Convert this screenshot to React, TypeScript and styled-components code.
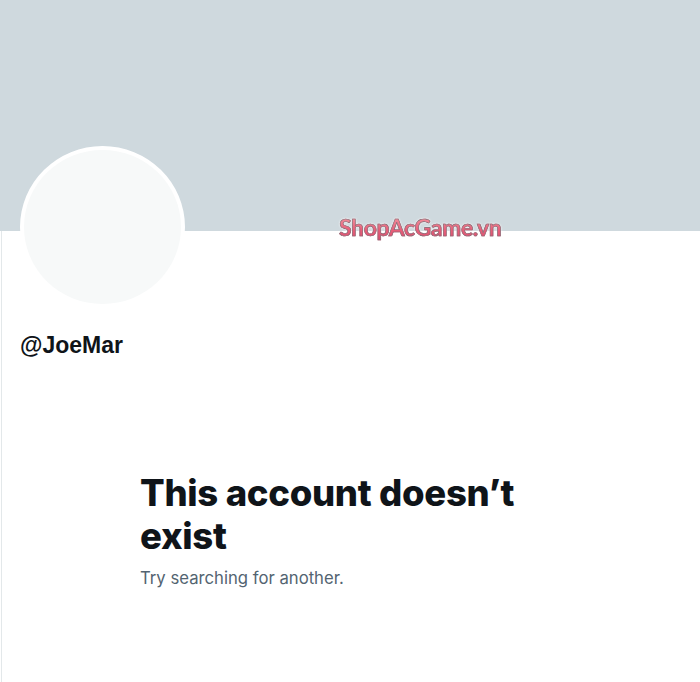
import React from "react";
import styled, { createGlobalStyle } from "styled-components";

const Global = createGlobalStyle`
  html, body { margin: 0; padding: 0; background: #ffffff; }
  body { font-family: "Inter", "Liberation Sans", sans-serif; }
`;

const Page = styled.div`
  position: relative;
  width: 700px;
  height: 682px;
  overflow: hidden;
  background: #ffffff;
  display: flex;
  flex-direction: column;
`;

const Banner = styled.div`
  flex: 0 0 231px;
  background: #cfd9de;
`;

const Body = styled.div`
  flex: 1;
  display: flex;
  flex-direction: column;
  align-items: flex-start;
  margin-left: 1px;
  border-left: 1px solid #e3e8ea;
  padding-left: 18px;
`;

const Avatar = styled.div`
  width: 157px;
  height: 154px;
  margin-top: -85px;
  border-radius: 50%;
  background: #f7f9f9;
  border: 4px solid #ffffff;
`;

const Handle = styled.div`
  margin-top: 23px;
  font-family: "Liberation Sans", Arial, sans-serif;
  font-weight: 700;
  font-size: 23px;
  line-height: 28px;
  color: #0f1419;
`;

const Message = styled.div`
  margin-top: 113px;
  margin-left: 120px;
  width: 420px;
`;

const Title = styled.h1`
  margin: 0;
  font-family: "Inter", sans-serif;
  font-weight: 800;
  font-size: 36.5px;
  line-height: 43px;
  color: #0f1419;
  letter-spacing: -0.3px;
`;

const Subtitle = styled.p`
  margin: 10px 0 0;
  font-family: "Inter", sans-serif;
  font-weight: 400;
  font-size: 16.7px;
  line-height: 20px;
  color: #536471;
`;

const Watermark = styled.div`
  position: absolute;
  left: 339px;
  top: 213px;
  font-family: "Lato", "Liberation Sans", sans-serif;
  font-weight: 700;
  font-size: 23px;
  letter-spacing: -0.4px;
  background: linear-gradient(180deg, #f7a0a8 0%, #e8607a 60%, #d94a6c 100%);
  -webkit-background-clip: text;
  background-clip: text;
  color: transparent;
  -webkit-text-stroke: 0.6px #7a6f76;
  filter: drop-shadow(0 0 1px rgba(255, 255, 255, 0.9));
`;

export default function App() {
  return (
    <>
      <Global />
      <Page>
        <Banner />
        <Body>
          <Avatar />
          <Handle>@JoeMar</Handle>
          <Message>
            <Title>This account doesn’t exist</Title>
            <Subtitle>Try searching for another.</Subtitle>
          </Message>
        </Body>
        <Watermark>ShopAcGame.vn</Watermark>
      </Page>
    </>
  );
}
